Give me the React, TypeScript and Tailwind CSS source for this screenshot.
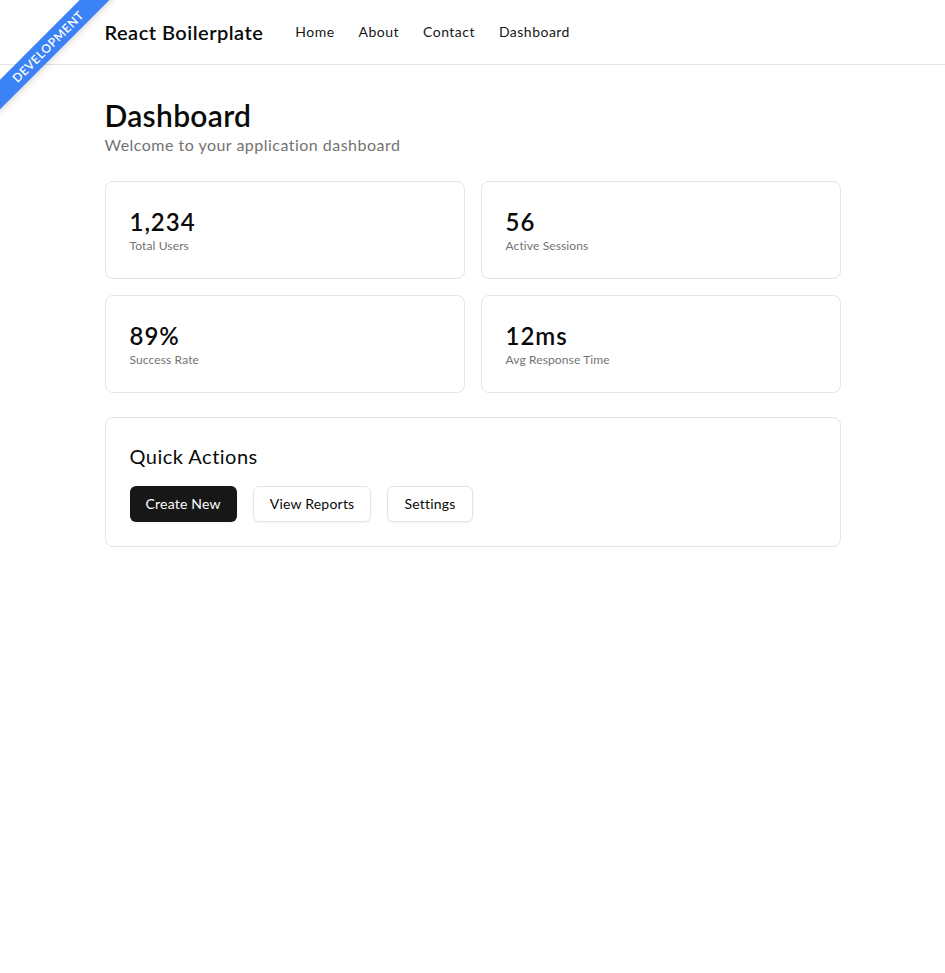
const stats = [
  { value: '1,234', label: 'Total Users' },
  { value: '56', label: 'Active Sessions' },
  { value: '89%', label: 'Success Rate' },
  { value: '12ms', label: 'Avg Response Time' },
]

function DevRibbon() {
  return (
    <div className="pointer-events-none absolute top-0 left-0 w-[130px] h-[130px] overflow-hidden z-10">
      <div className="absolute left-[-34px] top-[36px] w-[164px] h-[21px] -rotate-45 bg-[#3b82f6] text-white text-[12px] font-semibold tracking-[0.05em] flex items-center justify-center shadow-md">
        DEVELOPMENT
      </div>
    </div>
  )
}

export default function App() {
  return (
    <div className="relative min-h-screen bg-white text-[#0a0a0a] tracking-[0.03em]" style={{ fontFamily: 'Lato, "Open Sans", sans-serif' }}>
      <DevRibbon />
      <header className="border-b border-[#e5e5e5]">
        <div className="max-w-3xl mx-auto px-4 h-16 flex items-center gap-8">
          <span className="text-xl font-semibold">React Boilerplate</span>
          <nav className="flex items-center gap-6 text-sm text-[#171717]">
            <a href="#">Home</a>
            <a href="#">About</a>
            <a href="#">Contact</a>
            <a href="#">Dashboard</a>
          </nav>
        </div>
      </header>

      <main className="max-w-3xl mx-auto px-4 py-8">
        <div className="mb-6">
          <h1 className="text-3xl font-semibold tracking-[0.01em]">Dashboard</h1>
          <p className="text-[#737373]">Welcome to your application dashboard</p>
        </div>

        <div className="grid grid-cols-2 gap-4">
          {stats.map((s) => (
            <div key={s.label} className="rounded-lg border border-[#e5e5e5] p-6">
              <div className="text-2xl font-semibold tracking-[0.04em]">{s.value}</div>
              <div className="text-xs text-[#737373] tracking-[0.01em]">{s.label}</div>
            </div>
          ))}
        </div>

        <div className="mt-6 rounded-lg border border-[#e5e5e5] p-6">
          <h2 className="text-xl mb-4">Quick Actions</h2>
          <div className="flex gap-4">
            <button className="h-9 px-4 rounded-md bg-[#171717] text-white text-sm tracking-[0.015em] shadow-xs">Create New</button>
            <button className="h-9 px-4 rounded-md border border-[#e5e5e5] bg-white text-sm tracking-[0.015em] shadow-xs">View Reports</button>
            <button className="h-9 px-4 rounded-md border border-[#e5e5e5] bg-white text-sm tracking-[0.015em] shadow-xs">Settings</button>
          </div>
        </div>
      </main>
    </div>
  )
}
